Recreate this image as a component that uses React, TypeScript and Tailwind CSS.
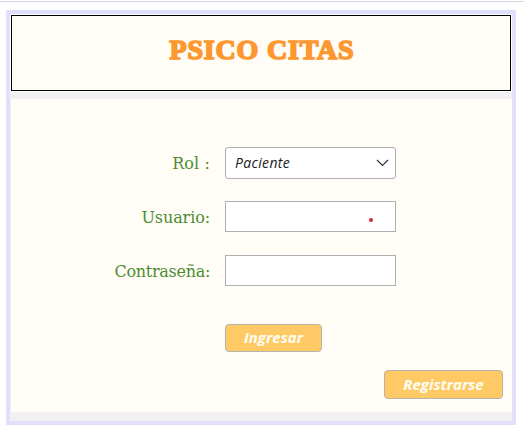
import type { ReactNode } from 'react';

function Row({ label, spacing, children }: { label: string; spacing: string; children: ReactNode }) {
  return (
    <div className="flex h-[31px] items-center">
      <label
        className={`mr-[15px] w-[199px] whitespace-nowrap pt-px text-right font-['DejaVu_Serif',serif] text-[16px] leading-[31px] text-[#4c8c32] ${spacing}`}
      >
        {label}
      </label>
      {children}
    </div>
  );
}

const button =
  "flex items-center justify-center rounded-[4px] border border-[#b5b5ad] bg-[#ffca65] pb-px font-['Open_Sans',sans-serif] text-[15px] font-bold italic leading-none text-[#fffdf2]";

export default function App() {
  return (
    <div className="h-[431px] w-[524px] overflow-hidden bg-white">
      <div className="mt-px h-px bg-[#ced7e5]" />
      <main className="ml-[6px] mt-[8px] flex h-[415px] w-[510px] flex-col border-4 border-[#e0e0fc] bg-[#f1f1f1]">
        <div className="h-[78px] bg-white p-px">
          <header className="flex h-[76px] w-[500px] justify-center border border-black bg-[#fffdf6]">
            <h1 className="mt-[16px] whitespace-nowrap pl-[2px] font-['Liberation_Serif',serif] text-[28px] font-bold leading-[36px] tracking-[0.8px] text-[#fd9830] [-webkit-text-stroke:1.7px_#fd9830]">
              PSICO CITAS
            </h1>
          </header>
        </div>
        <form className="ml-px mt-[7px] flex h-[313px] w-[501px] flex-col bg-[#fffdf6] pt-[48px]">
          <div className="flex flex-col gap-[23px]">
            <Row label="Rol :" spacing="tracking-[0.1px]">
              <div className="flex h-[32px] w-[171px] items-center justify-between rounded-[3px] border border-[#afafb3] bg-white pl-[9px] pr-[6px] font-['Open_Sans',sans-serif] text-[14px] italic leading-none tracking-[0.35px] text-[#202020]">
                <span>Paciente</span>
                <svg width="13" height="8" viewBox="0 0 13 8" fill="none" stroke="#333" strokeWidth="1.2">
                  <path d="M1 1l5.5 5.5L12 1" />
                </svg>
              </div>
            </Row>
            <Row label="Usuario:" spacing="tracking-[-0.1px]">
              <div className="flex h-[31px] w-[171px] items-center justify-end border border-[#afafb3] bg-white pr-[22px] pt-[6px]">
                <span className="size-[4px] rounded-full bg-[#d22730]" />
              </div>
            </Row>
            <Row label="Contraseña:" spacing="tracking-[-0.3px]">
              <input type="password" className="h-[31px] w-[171px] border border-[#afafb3] bg-white outline-none" />
            </Row>
          </div>
          <button type="button" className={`ml-[214px] mt-[38px] h-[28px] w-[97px] ${button}`}>
            Ingresar
          </button>
          <button type="button" className={`ml-[373px] mt-[18px] h-[29px] w-[119px] ${button}`}>
            Registrarse
          </button>
        </form>
      </main>
    </div>
  );
}
